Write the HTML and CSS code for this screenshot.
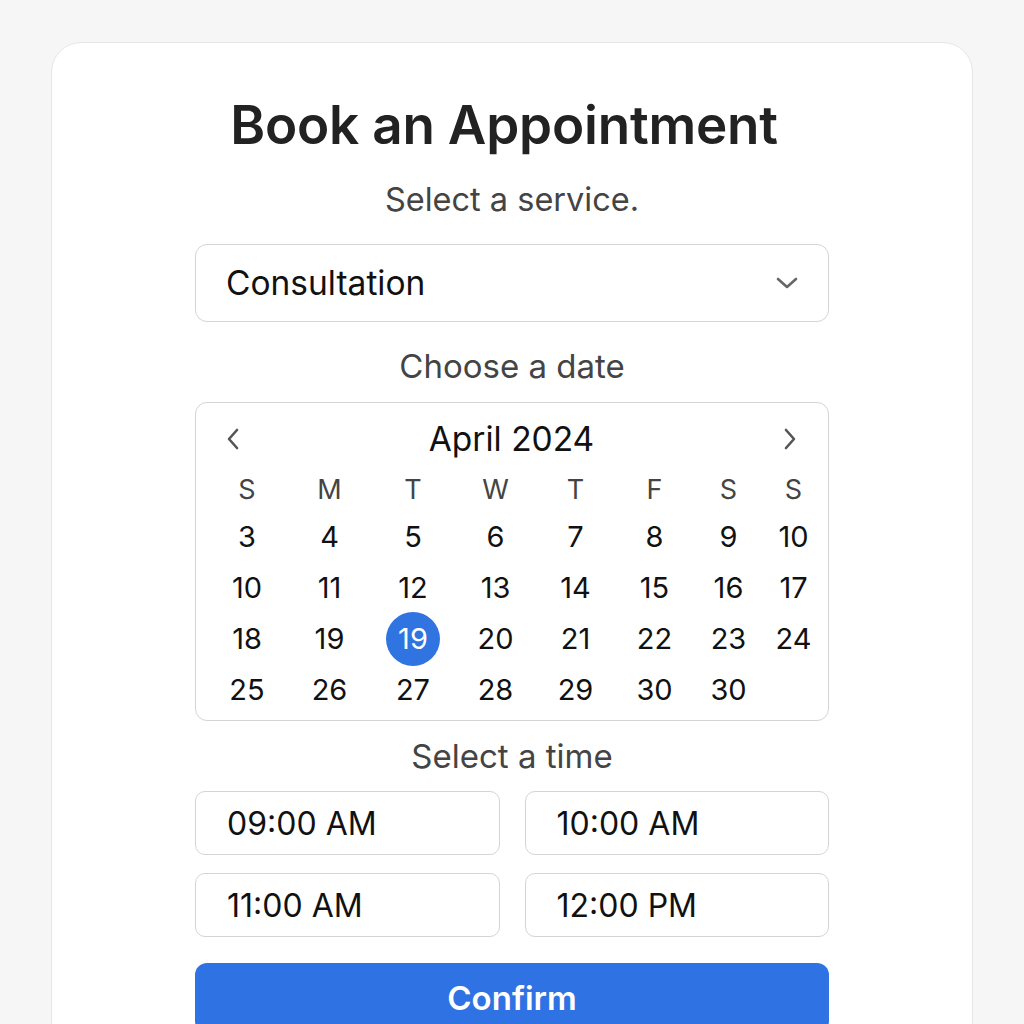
FILE: index.html
```html
<!DOCTYPE html>
<html lang="en">
<head>
    <meta charset="UTF-8">
    <meta name="viewport" content="width=device-width, initial-scale=1.0">
    <title>Book an Appointment</title>
    <link rel="stylesheet" href="styles.css">
</head>
<body>

<div class="card">
    <h1>Book an Appointment</h1>

    <!-- Servizio -->
    <p class="label label-service">Select a service.</p>
    <div class="select">
        <span>Consultation</span>
        <svg class="chevron-down" width="22" height="14" viewBox="0 0 22 14">
            <path d="M2 3 L11 11 L20 3" fill="none" stroke="#666" stroke-width="2.6" stroke-linecap="round" stroke-linejoin="round"/>
        </svg>
    </div>

    <!-- Calendario -->
    <p class="label label-date">Choose a date</p>
    <div class="calendar">
        <div class="cal-header">
            <svg class="nav prev" width="14" height="22" viewBox="0 0 14 22">
                <path d="M11 2 L3 11 L11 20" fill="none" stroke="#555" stroke-width="2.6" stroke-linecap="round" stroke-linejoin="round"/>
            </svg>
            <span class="month">April 2024</span>
            <svg class="nav next" width="14" height="22" viewBox="0 0 14 22">
                <path d="M3 2 L11 11 L3 20" fill="none" stroke="#555" stroke-width="2.6" stroke-linecap="round" stroke-linejoin="round"/>
            </svg>
        </div>
        <div class="days">
            <span class="wd">S</span><span class="wd">M</span><span class="wd">T</span><span class="wd">W</span>
            <span class="wd">T</span><span class="wd">F</span><span class="wd">S</span><span class="wd">S</span>

            <span>3</span><span>4</span><span>5</span><span>6</span><span>7</span><span>8</span><span>9</span><span>10</span>
            <span>10</span><span>11</span><span>12</span><span>13</span><span>14</span><span>15</span><span>16</span><span>17</span>
            <span>18</span><span>19</span><span><b class="selected">19</b></span><span>20</span><span>21</span><span>22</span><span>23</span><span>24</span>
            <span>25</span><span>26</span><span>27</span><span>28</span><span>29</span><span>30</span><span>30</span><span></span>
        </div>
    </div>

    <!-- Orari -->
    <p class="label label-time">Select a time</p>
    <div class="times">
        <button class="time">09:00 AM</button>
        <button class="time">10:00 AM</button>
        <button class="time">11:00 AM</button>
        <button class="time">12:00 PM</button>
    </div>

    <button class="confirm">Confirm</button>
</div>

</body>
</html>
```

FILE: styles.css
```css
    body {
        font-family: Inter, "Noto Sans", sans-serif;
        margin: 0;
        background-color: #f6f6f6;
        color: #111;
        height: 1024px;
        overflow: hidden;
    }
    .card {
        width: 634px;
        margin: 42px auto 0;
        padding: 54px 143px 40px;
        background-color: #fff;
        border: 1px solid #e6e6e6;
        border-radius: 30px;
        display: flex;
        flex-direction: column;
    }
    h1 {
        margin: 0;
        padding-right: 16px;
        font-size: 53px;
        line-height: 56px;
        font-weight: 600;
        color: #222;
        text-align: center;
        letter-spacing: -0.2px;
    }
    .label {
        margin: 0;
        font-size: 32.5px;
        line-height: 40px;
        color: #444;
        text-align: center;
    }
    .label-service {
        margin-top: 27px;
    }
    .label-date {
        margin-top: 24px;
        font-size: 33px;
    }
    .label-time {
        margin-top: 15px;
        font-size: 33px;
    }
    .select {
        margin-top: 24px;
        height: 76px;
        border: 1px solid #d4d4d4;
        border-radius: 12px;
        display: flex;
        align-items: center;
        justify-content: space-between;
        padding: 0 30px 0 30px;
        font-size: 33.5px;
    }
    .calendar {
        margin-top: 16px;
        border: 1px solid #d4d4d4;
        border-radius: 12px;
        padding: 8px 6px 5px 10px;
    }
    .cal-header {
        height: 56px;
        display: grid;
        grid-template-columns: 1fr auto 1fr;
        align-items: center;
        padding: 0 25px 0 20px;
    }
    .prev {
        justify-self: start;
    }
    .next {
        justify-self: end;
    }
    .month {
        font-size: 33.5px;
    }
    .days {
        display: grid;
        grid-template-columns: 82px 83px 84px 81px 79px 79px 69px 61px;
        grid-template-rows: 44px repeat(4, 51px);
        font-size: 29px;
    }
    .days span {
        display: flex;
        align-items: center;
        justify-content: center;
    }
    .days .wd {
        font-size: 27px;
        color: #444;
    }
    .selected {
        width: 54px;
        height: 54px;
        border-radius: 50%;
        background-color: #2f74e0;
        color: #fff;
        font-weight: 400;
        display: flex;
        align-items: center;
        justify-content: center;
    }
    .times {
        margin-top: 15px;
        display: grid;
        grid-template-columns: 1fr 1fr;
        gap: 18px 25px;
    }
    button {
        font-family: Inter, "Noto Sans", sans-serif;
        cursor: pointer;
    }
    .time {
        height: 64px;
        background-color: #fff;
        border: 1px solid #d4d4d4;
        border-radius: 10px;
        text-align: left;
        padding: 0 31px;
        font-size: 32px;
        color: #111;
    }
    .confirm {
        margin-top: 26px;
        height: 70px;
        border: none;
        border-radius: 12px;
        background-color: #2f72e3;
        color: #fff;
        font-size: 33px;
        font-weight: 600;
    }
```
